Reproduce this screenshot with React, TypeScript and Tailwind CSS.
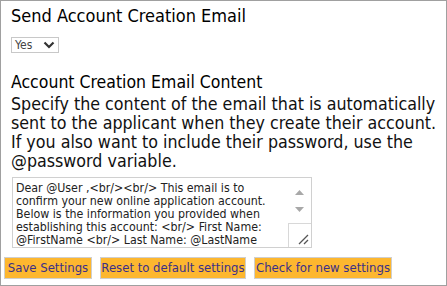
import React from "react";

export default function App() {
  const font = { fontFamily: '"DejaVu Sans Condensed", "DejaVu Sans", Verdana, sans-serif' };
  return (
    <div
      className="w-[447px] h-[286px] border border-[#a0a0a0] bg-white text-black box-border overflow-hidden"
      style={font}
    >
      <div className="pl-[10px] pr-[4px]">
        <div className="text-[18px] leading-[22px] pt-[4px]">Send Account Creation Email</div>
        <div className="mt-[10px] w-[48px] h-[16px] border border-[#c8c8c8] flex items-center justify-between pl-[3px] pr-[3px] text-[12px] text-[#444]">
          <span>Yes</span>
          <svg width="12" height="8" viewBox="0 0 12 8">
            <path d="M1.5 1.5 L6 6 L10.5 1.5" fill="none" stroke="#333" strokeWidth="2.2" />
          </svg>
        </div>
        <div className="text-[17.5px] leading-[20px] mt-[19px]">Account Creation Email Content</div>
        <div className="text-[17.7px] leading-[19px] mt-[3px] text-[#111]">
          Specify the content of the email that is automatically sent to the applicant when they create their account. If you also want to include their password, use the @password variable.
        </div>
        <div className="mt-[6px] ml-[1px] w-[300px] h-[71px] border border-[#d0d0d0] flex">
          <div className="flex-1 text-[12.3px] leading-[13px] pl-[3px] pr-[3px] pt-[4px] text-[#222] overflow-hidden">
            Dear @User ,&lt;br/&gt;&lt;br/&gt; This email is to confirm your new online application account. Below is the information you provided when establishing this account: &lt;br/&gt; First Name: @FirstName &lt;br/&gt; Last Name: @LastName &lt;br/&gt; Email: @Email
          </div>
          <div className="w-[23px] flex flex-col">
            <div className="flex-1 flex flex-col items-center pt-[12px] gap-[12px]">
              <svg width="9" height="5" viewBox="0 0 9 5"><path d="M0 5 L4.5 0 L9 5 Z" fill="#a8a8a8" /></svg>
              <svg width="9" height="5" viewBox="0 0 9 5"><path d="M0 0 L4.5 5 L9 0 Z" fill="#a8a8a8" /></svg>
            </div>
            <div className="h-[24px] border-t border-l border-[#d8d8d8] flex items-end justify-end pr-[2px] pb-[2px]">
              <svg width="11" height="11" viewBox="0 0 11 11">
                <path d="M10 1 L1 10 M10 6 L6 10" stroke="#555" strokeWidth="1.3" fill="none" />
              </svg>
            </div>
          </div>
        </div>
      </div>
      <div className="flex gap-[8px] pl-[3px] mt-[9px]">
        {[
          ["Save Settings", "w-[88px]"],
          ["Reset to default settings", "w-[146px]"],
          ["Check for new settings", "w-[138px]"],
        ].map(([t, w]) => (
          <div
            key={t}
            className={`${w} h-[22px] bg-[#fdb72f] border border-[#cfcfcf] text-[#3b2f88] text-[13px] flex items-center justify-center whitespace-nowrap`}
          >
            {t}
          </div>
        ))}
      </div>
    </div>
  );
}
